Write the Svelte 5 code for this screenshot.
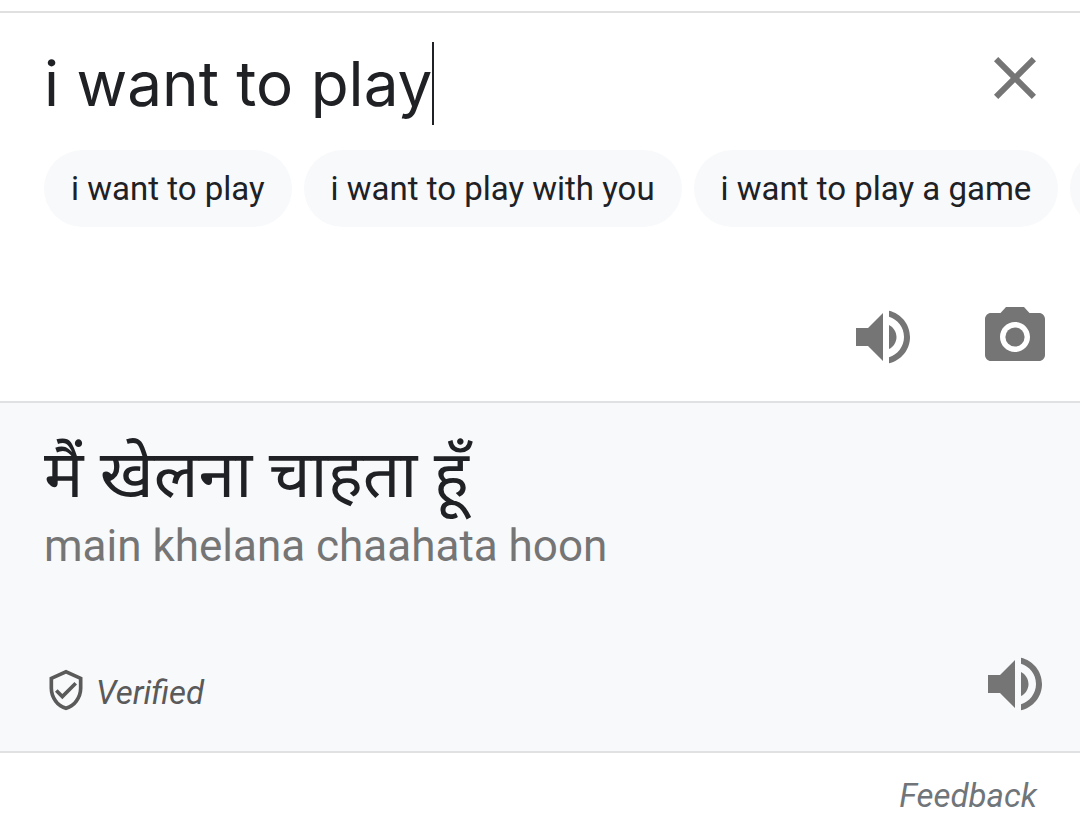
<script>
  let query = $state('i want to play');

  const suggestions = [
    'i want to play',
    'i want to play with you',
    'i want to play a game',
    'i want to play football'
  ];

  const result = {
    text: 'मैं खेलना चाहता हूँ',
    romanized: 'main khelana chaahata hoon'
  };

  const choose = (text) => {
    query = text;
  };

  const clear = () => {
    query = '';
  };
</script>

{#snippet speaker()}
  <svg viewBox="0 0 24 24" aria-hidden="true">
    <path d="M3 9v6h4l5 5V4L7 9H3zm13.5 3c0-1.77-1.02-3.29-2.5-4.03v8.05c1.48-.73 2.5-2.25 2.5-4.02zM14 3.23v2.06c2.89.86 5 3.54 5 6.71s-2.11 5.85-5 6.71v2.06c4.01-.91 7-4.49 7-8.77s-2.99-7.86-7-8.77z" />
  </svg>
{/snippet}

<main>
  <section class="source">
    <div class="query">
      <div class="field">
        <input type="text" aria-label="Source text" bind:value={query} />
        <span class="caret"></span>
      </div>
      <button class="icon" aria-label="Clear source text" onclick={clear}>
        <svg viewBox="0 0 24 24" aria-hidden="true">
          <path d="M19 6.41L17.59 5 12 10.59 6.41 5 5 6.41 10.59 12 5 17.59 6.41 19 12 13.41 17.59 19 19 17.59 13.41 12z" />
        </svg>
      </button>
    </div>

    <ul class="chips">
      {#each suggestions as suggestion}
        <li><button class="chip" onclick={() => choose(suggestion)}>{suggestion}</button></li>
      {/each}
    </ul>

    <div class="tools">
      <button class="icon" aria-label="Listen to source text">{@render speaker()}</button>
      <button class="icon" aria-label="Translate by camera">
        <svg viewBox="0 0 24 24" aria-hidden="true">
          <circle cx="12" cy="12" r="3.2" />
          <path d="M9 2L7.17 4H4c-1.1 0-2 .9-2 2v12c0 1.1.9 2 2 2h16c1.1 0 2-.9 2-2V6c0-1.1-.9-2-2-2h-3.17L15 2H9zm3 15c-2.76 0-5-2.24-5-5s2.24-5 5-5 5 2.24 5 5-2.24 5-5 5z" />
        </svg>
      </button>
    </div>
  </section>

  <section class="result">
    <p class="translation" lang="hi">{result.text}</p>
    <p class="romanized">{result.romanized}</p>
    <div class="result-footer">
      <span class="verified">
        <svg viewBox="0 0 24 24" aria-hidden="true">
          <path d="M12 1L3 5v6c0 5.55 3.84 10.74 9 12 5.16-1.26 9-6.45 9-12V5l-9-4zm7 10c0 4.52-2.98 8.69-7 9.93-4.02-1.24-7-5.41-7-9.93V6.3l7-3.11 7 3.11V11zm-11.59.59L6 13l4 4 8-8-1.41-1.42L10 14.17z" />
        </svg>
        Verified
      </span>
      <button class="icon" aria-label="Listen to translation">{@render speaker()}</button>
    </div>
  </section>

  <footer>
    <a href="#feedback">Feedback</a>
  </footer>
</main>

<style>
  :global(body) {
    margin: 0;
    background: #fff;
  }

  main {
    padding-top: 11px;
    overflow: hidden;
    font-family: Roboto, 'Noto Sans', sans-serif;
    font-size: 33px;
    color: #202124;
  }

  button {
    border: 0;
    padding: 0;
    background: none;
    font: inherit;
    color: inherit;
    cursor: pointer;
  }

  .source {
    border-top: 2px solid #e0e0e0;
    padding: 29px 0 28px 44px;
  }

  .query {
    display: flex;
    align-items: flex-start;
    justify-content: space-between;
    padding-right: 29px;
  }

  .field {
    display: flex;
    min-width: 0;
  }

  .field input {
    field-sizing: content;
    box-sizing: border-box;
    min-width: 0;
    height: 83px;
    border: 0;
    padding: 0;
    outline: 0;
    background: none;
    font-family: 'Google Sans', Inter, sans-serif;
    font-size: 62px;
    color: inherit;
    caret-color: transparent;
  }

  .caret {
    flex: none;
    width: 2px;
    background: #202124;
  }

  .icon {
    flex: none;
    width: 72px;
    height: 72px;
    color: #757575;
  }

  svg {
    display: block;
    fill: currentColor;
  }

  .chips {
    display: flex;
    gap: 12px;
    margin: 25px 0 0;
    padding: 0;
    list-style: none;
    overflow: hidden;
  }

  .chip {
    height: 77px;
    padding: 0 27px;
    border-radius: 39px;
    background: #f8f9fb;
    white-space: nowrap;
  }

  .tools {
    display: flex;
    justify-content: flex-end;
    gap: 60px;
    margin-top: 74px;
    padding-right: 29px;
  }

  .result {
    border-top: 2px solid #dfe1e3;
    border-bottom: 2px solid #dfe1e3;
    padding: 28px 29px 31px 44px;
    background: #f8f9fb;
  }

  .result p {
    margin: 0;
  }

  .translation {
    font-size: 66px;
    line-height: 87px;
  }

  .romanized {
    font-size: 44px;
    line-height: 56px;
    color: #757575;
  }

  .result-footer {
    display: flex;
    align-items: center;
    justify-content: space-between;
    margin-top: 74px;
  }

  .verified {
    display: flex;
    align-items: flex-end;
    gap: 8px;
    margin-top: 12px;
    font-style: italic;
    color: #5a5a5a;
  }

  .verified svg {
    width: 44px;
    height: 44px;
  }

  footer {
    padding: 22px 43px 14px;
    text-align: right;
  }

  footer a {
    font-style: italic;
    line-height: 42px;
    color: #70757a;
    text-decoration: none;
  }
</style>
